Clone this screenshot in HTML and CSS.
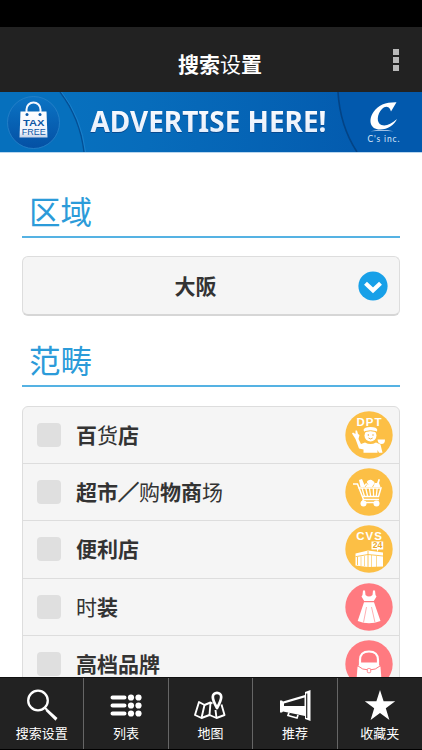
FILE: index.html
```html
<!DOCTYPE html>
<html lang="zh-CN">
<head>
<meta charset="utf-8">
<title>搜索设置</title>
<link rel="stylesheet" href="styles.css">
</head>
<body>
<div class="app">
  <div class="status"></div>
  <header class="bar">
    <h1>搜索<span class="thin">设</span>置</h1>
    <div class="more"><i></i><i></i><i></i></div>
  </header>
  <div class="banner">
    <svg width="422" height="60" viewBox="0 0 422 60">
      <defs>
        <linearGradient id="bg" x1="0" y1="0" x2="1" y2="0"><stop offset="0" stop-color="#0774c1"/><stop offset=".35" stop-color="#076cbb"/><stop offset="1" stop-color="#0256ab"/></linearGradient>
        <linearGradient id="disc" x1="0" y1="0" x2="0" y2="1"><stop offset="0" stop-color="#0b74c4"/><stop offset="1" stop-color="#0450a4"/></linearGradient>
        <linearGradient id="bag" x1="0" y1="0" x2="0" y2="1"><stop offset="0" stop-color="#fff"/><stop offset=".8" stop-color="#eef3fb"/><stop offset="1" stop-color="#c3d2e8"/></linearGradient>
        <linearGradient id="txt" x1="0" y1="0" x2="0" y2="1"><stop offset="0" stop-color="#fff"/><stop offset="1" stop-color="#dfeafa"/></linearGradient>
      </defs>
      <rect width="422" height="60" fill="url(#bg)"/>
      <path d="M0 0H60Q80 26 84 60H0Z" fill="#0670bd"/>
      <path d="M60 0Q80 26 84 60" fill="none" stroke="#044f95" stroke-width="1.3"/>
      <path d="M61.5 0Q81.500 26 85.500 60" fill="none" stroke="#2186d0" stroke-width=".7"/>
      <path d="M338 0Q340 34 357 60H422V0Z" fill="#0259ad"/>
      <path d="M338 0Q340 34 357 60" fill="none" stroke="#034385" stroke-width="1.600"/>
      <circle cx="33.500" cy="30.500" r="26" fill="url(#disc)" stroke="#2a83c9" stroke-width=".8"/>
      <path d="M26.500 21V17.500a7 7 0 0 1 14 0V21" fill="none" stroke="#f4f8ff" stroke-width="2"/>
      <path d="M20.500 19.500H46.500L47.500 45.500H19.500Z" fill="url(#bag)"/>
      <circle cx="27" cy="22.500" r="1.500" fill="#0b5aaa"/><circle cx="40" cy="22.500" r="1.500" fill="#0b5aaa"/>
      <text x="33.700" y="33.800" class="tax" textLength="21.500" lengthAdjust="spacingAndGlyphs">TAX</text>
      <text x="33.700" y="42.800" class="free" textLength="24" lengthAdjust="spacingAndGlyphs">FREE</text>
      <text x="90.500" y="40.300" class="ad" textLength="236" lengthAdjust="spacingAndGlyphs">ADVERTISE HERE!</text>
      <path d="M396.500 10.200C386 10 378 13 373.500 20C368 28 370 37.500 380 37.500C388 37.500 394 33 397 27C391 32 386 34.500 381.500 33C376 31 377 22 382 17C385 14 388 14 390 17L391 19.500Z" fill="#fff"/>
      <path d="M370.500 39.300Q382 36.600 393.500 39.300Q382 38.300 370.500 39.300Z" fill="#d4e4f8"/>
      <text x="367.500" y="49.800" class="inc" textLength="32">C's inc.</text>
    </svg>
  </div>
  <main class="content">
    <h2>区域</h2>
    <div class="select"><span>大阪</span>
      <svg width="30" height="30" viewBox="0 0 30 30"><circle cx="15" cy="15" r="14.600" fill="#18a0e8"/><path d="M7.500 12.300L15 19.300L22.500 12.300" fill="none" stroke="#fff" stroke-width="4.200"/></svg>
    </div>
    <h2 class="second">范畴</h2>
    <ul class="list">
      <li><i class="box"></i><span>百<span class="thin">货</span>店</span>
        <svg viewBox="0 0 48 48"><circle cx="24" cy="24" r="23.700" fill="#fcbf45"/><text x="24.500" y="14.700" class="tag">DPT</text>
        <g fill="#fff"><path d="M18.500 19Q19 16 25.500 16Q32 16 32.300 19L31.500 21H19.500Z"/><circle cx="25.500" cy="24.500" r="6"/><path d="M20 31.500Q25.500 34.500 31 31.500L35.500 33.500L37.500 41.800H34L32.500 39V41.800H18.500V38.500L14 37.500L10.500 28L7 22.500L8 21.500L10.500 23L10.500 19.500H12L13 23L14.500 24L13.500 28L16 33Z"/><path d="M32.500 28.500H40Q40 33 36.500 33Q33 33 32.500 28.500Z"/></g>
        <path d="M19.500 20.700Q25.500 18.700 31.500 20.700" fill="none" stroke="#fcbf45"/><g fill="#e9a42e"><circle cx="23.300" cy="24" r=".7"/><circle cx="28" cy="24" r=".7"/></g><path d="M23.500 27Q25.500 29 27.700 27" stroke="#e9a42e" stroke-width=".8" fill="none"/></svg></li>
      <li><i class="box"></i><span>超市<span class="slash">／</span><span class="thin">购</span>物商<span class="thin">场</span></span>
        <svg viewBox="0 0 48 48"><circle cx="24" cy="24" r="23.700" fill="#fcbf45"/>
        <g fill="none" stroke="#fff" stroke-width="1.500"><path d="M8 16H12.500L18.500 31.500H34"/><path d="M13.500 20H36L33.500 28.500H17.500"/><path d="M17 20L19.500 28.500M20.700 20L22.700 28.500M24.400 20L25.700 28.500M28.300 20L28.600 28.500M32.200 20L31.200 28.500" stroke-width="1.300"/><path d="M18.500 31.500L17 34.500H34"/></g>
        <g fill="#fff"><circle cx="18.500" cy="35.500" r="3"/><circle cx="31.500" cy="35.500" r="3"/><path d="M15.500 19L14 12L17 11L19.500 17L21 15L24 17Q20.500 14 23 12.500Q26 11 28 13Q31 14 28 17L30 15H32L33.500 11L35 11.500L34 15L35.500 19Z"/></g><path d="M20 19L22 16.500M29 16.500L27.500 19" stroke="#fcbf45" stroke-width=".8"/></svg></li>
      <li><i class="box"></i><span>便利店</span>
        <svg viewBox="0 0 48 48"><circle cx="24" cy="24" r="23.700" fill="#fcbf45"/><text x="24.500" y="14.700" class="tag">CVS</text>
        <path d="M26.500 16.500H38.200V24.500H33.500L32 27V24.500H26.500Z" fill="#fff"/><text x="32.400" y="23.400" class="num">24</text>
        <path d="M10.500 28.500L23 25.500L38 27.500V41.500L23 42L10.500 40.500Z" fill="#fff"/><path d="M10.500 31.700L23 29.500L38 31M23 26V42M12.500 32V40" fill="none" stroke="#fcbf45" stroke-width=".9"/><path d="M16 31.500V41M19.500 31V41M26.500 30V42M31.500 31V42" fill="none" stroke="#fcbf45" stroke-width=".6"/></svg></li>
      <li><i class="box"></i><span><span class="thin">时</span>装</span>
        <svg viewBox="0 0 48 48"><circle cx="24" cy="24" r="23.700" fill="#ff7a80"/>
        <path d="M18 7.500H20L20.500 12Q24 15 27.500 12L28 7.500H30L30.500 12L31.500 13.500L28.800 18H19.200L16.500 13.500L17.500 12ZM19 19.300H29L35.500 38Q24 42.500 12.700 38Z" fill="#fff"/><path d="M21.500 24L18.500 39.500M26.500 24L30 39.500" stroke="#ff9ba0" stroke-width=".8"/></svg></li>
      <li><i class="box"></i><span>高档品牌</span>
        <svg viewBox="0 0 48 48"><circle cx="24" cy="24" r="23.700" fill="#ff7a80"/>
        <path d="M15 25V20Q15 11.500 24 11.500Q33 11.500 33 20V25" fill="none" stroke="#fff" stroke-width="2.200"/><path d="M15.500 22.500H32.500L35.500 27L36.500 40H11.500L12.500 27Z" fill="#fff"/><path d="M13 26Q17 30 24 30Q31 30 35 26" fill="none" stroke="#ff7a80" stroke-width="1"/><rect x="22.300" y="28.500" width="3.400" height="4.200" rx="1" fill="#fff" stroke="#ff7a80" stroke-width=".9"/></svg></li>
    </ul>
  </main>
  <nav class="tabs">
    <div class="tab"><svg viewBox="0 0 36 36"><circle cx="14" cy="13.500" r="9.800" fill="none" stroke="#fff" stroke-width="2.300"/><path d="M20.500 20.500L23 22.700" stroke="#fff" stroke-width="2"/><path d="M23.500 22L33.500 31L31.500 33.700L21.500 23.800Z" fill="#fff"/></svg><span>搜索设置</span></div>
    <div class="tab"><svg viewBox="0 0 36 36"><g stroke="#fff" stroke-width="4" stroke-linecap="round"><path d="M4.500 10.500H16.500M4.500 18.500H16.500M4.500 26.500H16.500"/></g><g fill="#fff"><circle cx="23" cy="10.500" r="3.100"/><circle cx="30.500" cy="10.500" r="3.100"/><circle cx="23" cy="18.500" r="3.100"/><circle cx="30.500" cy="18.500" r="3.100"/><circle cx="23" cy="26.500" r="3.100"/><circle cx="30.500" cy="26.500" r="3.100"/></g></svg><span>列表</span></div>
    <div class="tab"><svg viewBox="0 0 36 36"><g fill="none" stroke="#fff" stroke-width="1.900" stroke-linejoin="round"><path d="M20.500 16.500L18.500 15.500L12.500 18L7 15L3 28L9.500 31L17.500 28L24.500 31L32.500 28L29.500 17.500"/><path d="M12.500 18L9.500 31M18.500 15.500L17.500 28M23.500 23L24.500 31"/><path d="M25 21Q20.800 13.500 20.800 10A4.200 4.200 0 0 1 29.200 10Q29.200 13.500 25 21Z" stroke-width="2.700"/></g></svg><span>地图</span></div>
    <div class="tab"><svg viewBox="0 0 36 36"><path d="M3 13.500H5L6 14.500L28 8V5L33.500 3V34L28 32V29L6 24.500L5 25.500H3Z" fill="#fff"/><path d="M7 16.500L27.500 10.500V19H7Z" fill="#222"/><path d="M29.700 6.500V31" stroke="#222" stroke-width="1.200"/><path d="M12 25.500L11 28.500L20 31L21 28" fill="none" stroke="#fff" stroke-width="1.700"/></svg><span>推荐</span></div>
    <div class="tab"><svg viewBox="0 0 36 36"><path d="M18 3L21.600 14.200H33.200L23.800 21.200L27.400 33L18 26L8.600 33L12.200 21.200L2.800 14.200H14.400Z" fill="#fff"/></svg><span>收藏夹</span></div>
  </nav>
</div>
</body>
</html>
```
FILE: styles.css
```css
* { box-sizing: border-box; margin: 0; padding: 0; }
body { background: #fff; font-family: "Noto Sans CJK SC", sans-serif; }
.app { width: 422px; height: 750px; overflow: hidden; display: flex; flex-direction: column; }
.app svg { display: block; flex: none; }
.status { height: 27px; flex: none; background: #000; }
.bar { height: 65px; flex: none; background: #222; display: grid; grid-template-columns: 50px 1fr 52px; align-items: center; }
.bar h1 { font-size: 21px; line-height: 30px; font-weight: 700; color: #fff; text-align: center; padding: 6px 0 0 20px; grid-column: 2; }
.thin { font-weight: 400; }
.slash { -webkit-text-stroke: 0.8px #333; }
.more { display: grid; gap: 2px; justify-content: center; }
.more i { width: 6px; height: 6px; background: #b9b9b9; }
.banner { height: 61px; flex: none; border-bottom: 1px solid #b9d6ee; }
.tax, .free { font-family: "Liberation Sans", sans-serif; font-size: 9px; fill: #0d57a4; text-anchor: middle; }
.tax { font-weight: 700; }
.ad { font-family: "Noto Sans", sans-serif; font-size: 28px; font-weight: 700; fill: url(#txt); filter: drop-shadow(0.5px 1px 0.5px #06498f); }
.inc { font-family: Lato, sans-serif; font-size: 8.5px; fill: #d7e6fa; }
.content { flex: 1; min-height: 0; overflow: hidden; padding: 36px 22px 0; }
h2 { height: 49px; font-size: 31.5px; line-height: 42px; font-weight: 400; color: #2b9bd9; border-bottom: 2px solid #55b2e3; padding-left: 7px; }
.second { margin-top: 22px; }
.select { height: 60px; margin-top: 18px; background: #f5f5f5; border: 1.5px solid #ddd; border-bottom: 2.5px solid #d6d6d6; border-radius: 6px; display: flex; align-items: center; }
.select span { flex: 1; text-align: center; padding: 0 0 2px 10px; font-size: 21px; font-weight: 700; color: #333; }
.select svg { margin-right: 11px; }
.list { list-style: none; margin-top: 19px; border: 1.5px solid #ddd; border-radius: 6px; background: #f5f5f5; }
.list li { height: 57.2px; border-bottom: 1.5px solid #ddd; display: flex; align-items: center; padding: 0 6px 0 14px; color: #333; font-size: 21px; font-weight: 700; }
.list li > span { flex: 1; padding-bottom: 2px; }
.list svg { width: 48px; height: 48px; }
.box { width: 24px; height: 24px; border-radius: 4px; background: #dfdfdf; margin-right: 15px; }
.tag { font-family: "Liberation Sans", sans-serif; font-size: 11.5px; font-weight: 700; letter-spacing: 1px; text-anchor: middle; fill: #fff; }
.num { font-family: "Liberation Sans", sans-serif; font-size: 8.5px; font-weight: 700; text-anchor: middle; fill: #eba928; }
.tabs { height: 73px; flex: none; display: grid; grid-template-columns: repeat(5, 1fr); background: #222; border-top: 1px solid #111; border-bottom: 1px solid #000; }
.tab { display: flex; flex-direction: column; align-items: center; padding-top: 9px; border-right: 1px solid #666; color: #fff; font-size: 13px; line-height: 19px; }
.tab:last-child { border-right: 0; }
.tab svg { width: 36px; height: 36px; }
```
